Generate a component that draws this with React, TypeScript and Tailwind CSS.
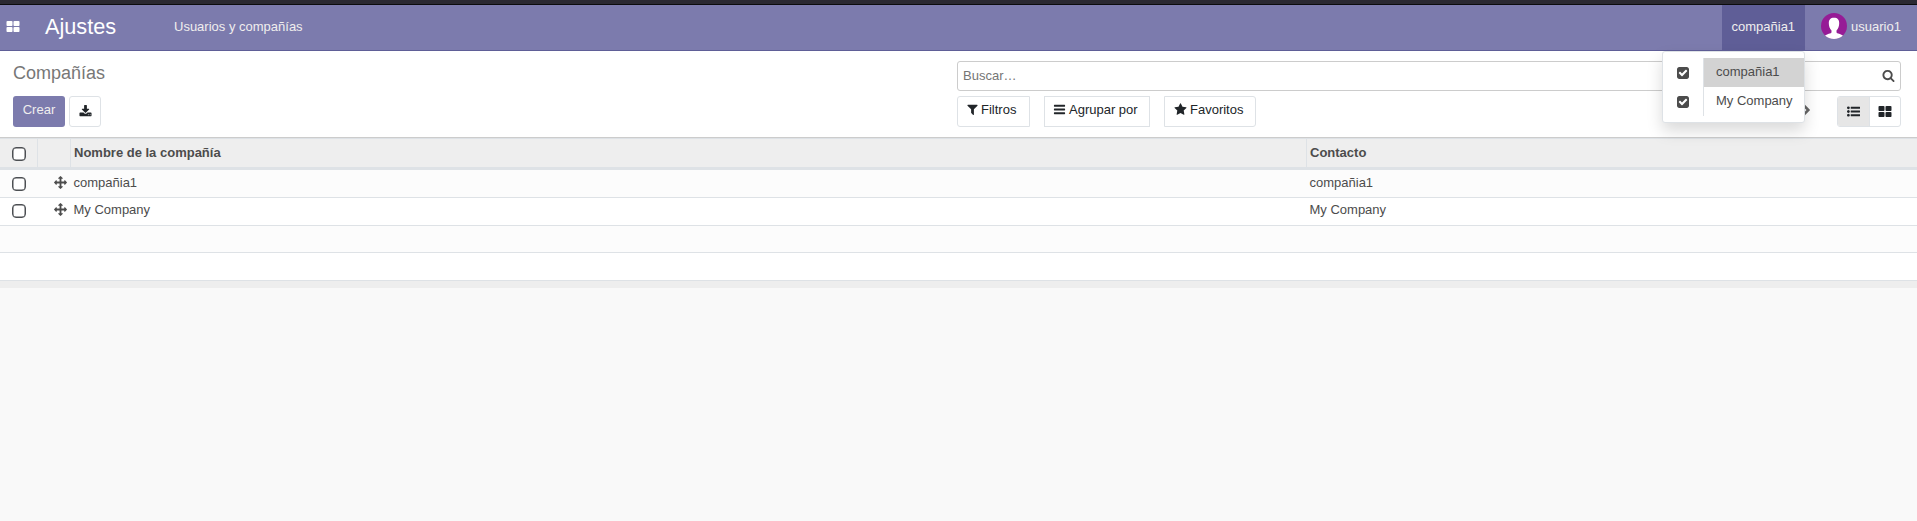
import React from "react";

const paths = {
  thLarge:
    "M832 1024v384q0 52-38 90t-90 38h-512q-52 0-90-38t-38-90v-384q0-52 38-90t90-38h512q52 0 90 38t38 90zm0-768v384q0 52-38 90t-90 38h-512q-52 0-90-38t-38-90v-384q0-52 38-90t90-38h512q52 0 90 38t38 90zm896 768v384q0 52-38 90t-90 38h-512q-52 0-90-38t-38-90v-384q0-52 38-90t90-38h512q52 0 90 38t38 90zm0-768v384q0 52-38 90t-90 38h-512q-52 0-90-38t-38-90v-384q0-52 38-90t90-38h512q52 0 90 38t38 90z",
  download:
    "M1344 1344q0-26-19-45t-45-19-45 19-19 45 19 45 45 19 45-19 19-45zm256 0q0-26-19-45t-45-19-45 19-19 45 19 45 45 19 45-19 19-45zm128-224v320q0 40-28 68t-68 28h-1472q-40 0-68-28t-28-68v-320q0-40 28-68t68-28h465l135 136q58 56 136 56t136-56l136-136h464q40 0 68 28t28 68zm-325-569q17 41-14 70l-448 448q-18 19-45 19t-45-19l-448-448q-31-29-14-70 17-39 59-39h256v-448q0-26 19-45t45-19h256q26 0 45 19t19 45v448h256q42 0 59 39z",
  arrows:
    "M1792 896q0 26-19 45l-256 256q-19 19-45 19t-45-19-19-45v-128h-384v384h128q26 0 45 19t19 45-19 45l-256 256q-19 19-45 19t-45-19l-256-256q-19-19-19-45t19-45 45-19h128v-384h-384v128q0 26-19 45t-45 19-45-19l-256-256q-19-19-19-45t19-45l256-256q19-19 45-19t45 19 19 45v128h384v-384h-128q-26 0-45-19t-19-45 19-45l256-256q19-19 45-19t45 19l256 256q19 19 19 45t-19 45-45 19h-128v384h384v-128q0-26 19-45t45-19 45 19l256 256q19 19 19 45z",
  filter:
    "M1595 295q17 41-14 70l-493 493v742q0 42-39 59-13 5-25 5-27 0-45-19l-256-256q-19-19-19-45v-486l-493-493q-31-29-14-70 17-39 59-39h1280q42 0 59 39z",
  bars: "M1664 1344v128q0 26-19 45t-45 19h-1408q-26 0-45-19t-19-45v-128q0-26 19-45t45-19h1408q26 0 45 19t19 45zm0-512v128q0 26-19 45t-45 19h-1408q-26 0-45-19t-19-45v-128q0-26 19-45t45-19h1408q26 0 45 19t19 45zm0-512v128q0 26-19 45t-45 19h-1408q-26 0-45-19t-19-45v-128q0-26 19-45t45-19h1408q26 0 45 19t19 45z",
  star: "M1728 647q0 22-26 48l-363 354 86 500q1 7 1 20 0 21-10.5 35.5t-30.5 14.5q-19 0-40-12l-449-236-449 236q-22 12-40 12-21 0-31.500-14.500t-10.500-35.500q0-6 2-20l86-500-364-354q-25-27-25-48 0-37 56-46l502-73 225-455q19-41 49-41t49 41l225 455 502 73q56 9 56 46z",
  search:
    "M1216 832q0-185-131.500-316.500t-316.500-131.500-316.500 131.500-131.500 316.500 131.500 316.500 316.500 131.500 316.500-131.500 131.500-316.500zm512 832q0 52-38 90t-90 38q-54 0-90-38l-343-342q-179 124-399 124-143 0-273.500-55.500t-225-150-150-225-55.500-273.500 55.500-273.500 150-225 225-150 273.500-55.500 273.500 55.500 225 150 150 225 55.500 273.500q0 220-124 399l343 343q37 37 37 90z",
  checkSquare:
    "M813 1299l614-614q19-19 19-45t-19-45l-102-102q-19-19-45-19t-45 19l-467 467-211-211q-19-19-45-19t-45 19l-102 102q-19 19-19 45t19 45l358 358q19 19 45 19t45-19zm851-883v960q0 119-84.500 203.500t-203.500 84.500h-960q-119 0-203.500-84.500t-84.500-203.500v-960q0-119 84.500-203.500t203.500-84.500h960q119 0 203.500 84.500t84.500 203.500z",
  chevronRight:
    "M1363 877l-742 742q-19 19-45 19t-45-19l-166-166q-19-19-19-45t19-45l531-531-531-531q-19-19-19-45t19-45l166-166q19-19 45-19t45 19l742 742q19 19 19 45t-19 45z",
  listUl:
    "M384 1408q0 80-56 136t-136 56-136-56-56-136 56-136 136-56 136 56 56 136zm0-512q0 80-56 136t-136 56-136-56-56-136 56-136 136-56 136 56 56 136zm0-512q0 80-56 136t-136 56-136-56-56-136 56-136 136-56 136 56 56 136zM1792 1312v192q0 13-9.500 22.500t-22.500 9.500h-1216q-13 0-22.500-9.500t-9.500-22.500v-192q0-13 9.500-22.500t22.500-9.500h1216q13 0 22.500 9.500t9.500 22.500zm0-512v192q0 13-9.500 22.500t-22.500 9.500h-1216q-13 0-22.500-9.500t-9.500-22.500v-192q0-13 9.500-22.500t22.500-9.500h1216q13 0 22.500 9.500t9.500 22.500zm0-512v192q0 13-9.500 22.500t-22.500 9.500h-1216q-13 0-22.500-9.500t-9.500-22.500v-192q0-13 9.500-22.500t22.500-9.500h1216q13 0 22.500 9.500t9.500 22.500z",
};

function Icon({ name, className = "" }: { name: keyof typeof paths; className?: string }) {
  return (
    <svg viewBox="0 0 1792 1792" fill="currentColor" fillRule="evenodd" className={`shrink-0 ${className}`}>
      <path d={paths[name]} />
    </svg>
  );
}

function Avatar() {
  return (
    <svg viewBox="0 0 26 26" className="h-[26px] w-[26px] shrink-0">
      <clipPath id="avatar">
        <circle cx="13" cy="13" r="13" />
      </clipPath>
      <g clipPath="url(#avatar)">
        <rect width="26" height="26" fill="#961c96" />
        <path
          fill="#fff"
          d="M13 4.700c-3.600 0-5.200 2-5.200 5.300 0 3.200.9 6 2.700 7.400v1.800c0 1.500-5 1.500-6.700 3.800L3 26h20l-.8-3c-1.700-2.300-6.700-2.300-6.700-3.800v-1.800c1.800-1.400 2.700-4.200 2.700-7.400 0-3.300-1.600-5.300-5.200-5.300z"
        />
      </g>
    </svg>
  );
}

function Checkbox() {
  return (
    <span className="block h-[14px] w-[14px] rounded-[4px] border border-[#4c4f53] bg-white shadow-[inset_0_0_0_0.5px_#4c4f53]" />
  );
}

function FilterButton({ icon, label, className }: { icon: keyof typeof paths; label: string; className: string }) {
  return (
    <button className={`flex h-[31px] items-start border border-[#dee2e6] pt-[4px] text-[#212529] ${className}`}>
      <Icon name={icon} className="mt-[2px] h-[13px] w-[13px]" />
      <span className="leading-[18px]">{label}</span>
    </button>
  );
}

const companies = ["compañia1", "My Company"];

export default function App() {
  return (
    <div className="flex h-[521px] w-[1917px] flex-col overflow-hidden bg-[#f9f9f9] font-['Liberation_Sans',Arial,sans-serif] text-[13px] leading-[18px] text-[#4c4c4c]">
      <div className="h-[5px] shrink-0 border-b border-[#0c0c0d] bg-[#2b2932]" />
      <header className="flex h-[46px] shrink-0 border-b border-[#5f5e97] bg-[#7c7bad] text-[#f0eeee]">
        <Icon name="thLarge" className="ml-[6px] mt-[15px] h-[14px] w-[14px] text-white" />
        <h1 className="ml-[25px] mt-[9px] w-[129px] text-[21.700px] leading-[26px] text-white">Ajustes</h1>
        <span className="mt-[13px]">Usuarios y compañías</span>
        <div className="relative ml-auto h-[45px] w-[83px] bg-[#5f5e97]">
          <span className="block pl-[9.500px] pt-[13px]">compañia1</span>
          <div className="absolute right-0 top-[46px] z-10 flex h-[72px] w-[143px] flex-col rounded-[3px] border border-[#dee2e6] bg-white pt-[6px] text-[#4c4c4c] shadow-[0_8px_16px_rgba(0,0,0,0.15)]">
            {companies.map((name, i) => (
              <div key={name} className="flex h-[29px]">
                <div className="flex w-[41px] items-center border-r border-[#dee2e6] pl-[13px] pt-px">
                  <Icon name="checkSquare" className="h-[14px] w-[14px]" />
                </div>
                <div className={`flex-1 whitespace-nowrap pl-[12px] pt-[5px] ${i === 0 ? "bg-[#d3d3d3]" : ""}`}>{name}</div>
              </div>
            ))}
          </div>
        </div>
        <div className="flex w-[112px] pl-[16px] pt-[8px]">
          <Avatar />
          <span className="ml-[4px] mt-[5px]">usuario1</span>
        </div>
      </header>
      <section className="flex h-[87px] shrink-0 border-b border-[#cccccc] bg-white">
        <div className="w-[957px] pl-[13px] pt-[10px]">
          <h2 className="text-[18px] leading-[24px] text-[#777777]">Compañías</h2>
          <div className="mt-[11px] flex gap-[4px]">
            <button className="flex h-[31px] w-[52px] justify-center rounded-[3px] bg-[#7c7bad] pt-[5px] text-[#f0eeee]">Crear</button>
            <button className="flex h-[31px] w-[32px] items-center justify-center rounded-[3px] border border-[#dee2e6] text-[#212529]">
              <Icon name="download" className="h-[13px] w-[13px]" />
            </button>
          </div>
        </div>
        <div className="w-[944px] pt-[10px]">
          <div className="flex h-[30px] justify-between rounded-[3px] border border-[#cccccc] pl-[5px] pr-[5px] pt-[5px]">
            <span className="text-[#757575]">Buscar…</span>
            <Icon name="search" className="mt-[2px] h-[13px] w-[13px]" />
          </div>
          <div className="mt-[5px] flex">
            <FilterButton icon="filter" label="Filtros" className="w-[73px] gap-[2px] rounded-l-[3px] pl-[8px]" />
            <FilterButton icon="bars" label="Agrupar por" className="ml-[14px] w-[106px] gap-[3px] pl-[8px]" />
            <FilterButton icon="star" label="Favoritos" className="ml-[14px] w-[92px] gap-[3px] rounded-r-[3px] pl-[9px]" />
            <Icon name="chevronRight" className="ml-auto mt-[8px] h-[13px] w-[13px] text-[#666666]" />
            <div className="ml-[24px] flex h-[31px] w-[64px] overflow-hidden rounded-[3px] border border-[#dee2e6] text-[#212529]">
              <div className="flex w-[32px] items-center justify-center border-r border-[#dee2e6] bg-[#e6e6e6]">
                <Icon name="listUl" className="h-[13px] w-[13px]" />
              </div>
              <div className="flex w-[30px] items-center justify-center">
                <Icon name="thLarge" className="h-[14px] w-[14px]" />
              </div>
            </div>
          </div>
        </div>
      </section>
      <main className="shrink-0">
        <div className="flex h-[32px] border-b-[3px] border-t border-[#dee2e6] bg-[#eeeeee] font-bold">
          <div className="w-[38px] border-r border-[#dee2e6] pl-[12px] pt-[8px]">
            <Checkbox />
          </div>
          <div className="w-[33px] border-r border-[#dee2e6]" />
          <div className="w-[1236px] border-r border-[#dee2e6] pl-[3px] pt-[5px]">Nombre de la compañía</div>
          <div className="pl-[3px] pt-[5px]">Contacto</div>
        </div>
        {companies.map((name, i) => (
          <div
            key={name}
            className={`flex h-[28px] items-start border-b border-[#dee2e6] ${i === 0 ? "bg-[#fcfcfc] pt-[4px]" : "bg-white pt-[3px]"}`}
          >
            <div className="w-[53.500px] pl-[12px] pt-[3px]">
              <Checkbox />
            </div>
            <Icon name="arrows" className="mt-[2px] h-[13px] w-[13px]" />
            <div className="ml-[7px] w-[1236px]">{name}</div>
            <div>{name}</div>
          </div>
        ))}
        <div className="h-[27px] border-b border-[#dee2e6] bg-[#fcfcfc]" />
        <div className="h-[28px] border-b border-[#dee2e6] bg-white" />
        <div className="h-[7px] bg-[#eeeeee]" />
      </main>
    </div>
  );
}
